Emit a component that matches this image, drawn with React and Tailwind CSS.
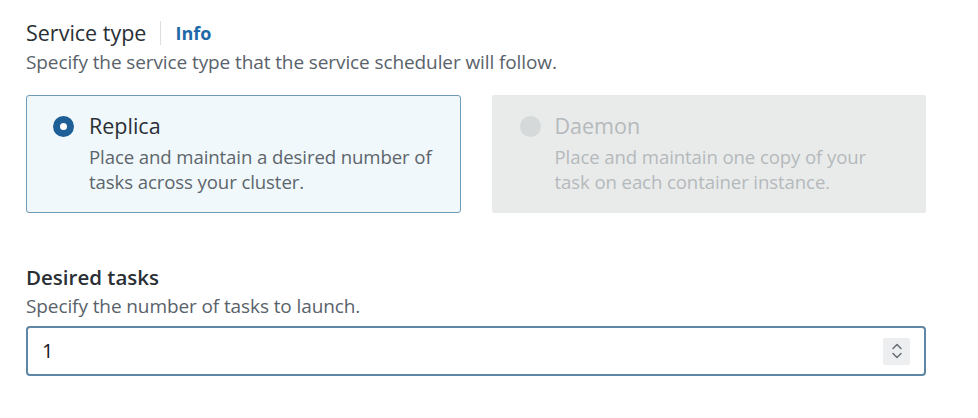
import React from "react";

const Radio = ({ checked, disabled }) => {
  if (checked) {
    return <span className="mt-[3px] block h-[21px] w-[21px] shrink-0 rounded-full border-[7px] border-[#1f5f98] bg-white" />;
  }
  return <span className={`mt-[3px] block h-[21px] w-[21px] shrink-0 rounded-full ${disabled ? "bg-[#d5d9d9]" : "border-2 border-gray-500 bg-white"}`} />;
};

const App = () => {
  return (
    <div className="h-[418px] w-[978px] bg-white pl-[26px] pr-[52px] pt-[20px] font-['Open_Sans',sans-serif]">
      {/* Service type */}
      <div className="flex h-[26px] items-center">
        <h2 className="text-[21.5px] leading-[26px] text-[#2a2f35]">Service type</h2>
        <span className="mx-[14px] h-[24px] w-px bg-[#dcdfe2]" />
        <a className="text-[18px] font-bold leading-[26px] text-[#1f69a8]">Info</a>
      </div>
      <p className="mt-[4px] text-[19px] leading-[24px] tracking-[-0.1px] text-[#59626a]">
        Specify the service type that the service scheduler will follow.
      </p>

      <div className="mt-[21px] grid grid-cols-2 gap-[31px]">
        <div className="flex h-[118px] gap-[15px] rounded-[3px] border border-[#6f9ab7] bg-[#f0f8fb] pl-[26px] pt-[17px]">
          <Radio checked />
          <div>
            <div className="text-[21.5px] leading-[26px] text-[#2a2f35]">Replica</div>
            <div className="mt-[5px] w-[360px] text-[18.6px] leading-[25px] tracking-[-0.1px] text-[#5d656c]">
              Place and maintain a desired number of tasks across your cluster.
            </div>
          </div>
        </div>
        <div className="flex h-[118px] gap-[14px] rounded-[2px] bg-[#e9ebeb] pl-[28px] pt-[18px]">
          <Radio disabled />
          <div>
            <div className="text-[21.5px] leading-[26px] text-[#b5b9bb]">Daemon</div>
            <div className="mt-[5px] w-[330px] text-[18.6px] leading-[25px] tracking-[-0.1px] text-[#b5b9bb]">
              Place and maintain one copy of your task on each container instance.
            </div>
          </div>
        </div>
      </div>

      {/* Desired tasks */}
      <h3 className="mt-[51px] text-[20.5px] font-semibold leading-[26px] text-[#2a2f35]">Desired tasks</h3>
      <p className="mt-[4px] text-[19px] leading-[24px] tracking-[-0.1px] text-[#59626a]">Specify the number of tasks to launch.</p>
      <div className="mt-[8px] flex h-[50px] items-center justify-between rounded-[4px] border-2 border-[#5e86a5] bg-white pl-[14px] pr-[14px]">
        <span className="text-[20px] text-[#16191f]">1</span>
        <span className="flex h-[27px] w-[27px] flex-col items-center justify-center rounded-[2px] bg-[#eceef0]">
          <svg width="12" height="18" viewBox="0 0 12 18" fill="none" stroke="#6b7279" strokeWidth="1.6" strokeLinecap="round" strokeLinejoin="round">
            <path d="M2 6.5 6 2.5 10 6.5" />
            <path d="M2 11.5 6 15.5 10 11.5" />
          </svg>
        </span>
      </div>
    </div>
  );
};

export default App;
